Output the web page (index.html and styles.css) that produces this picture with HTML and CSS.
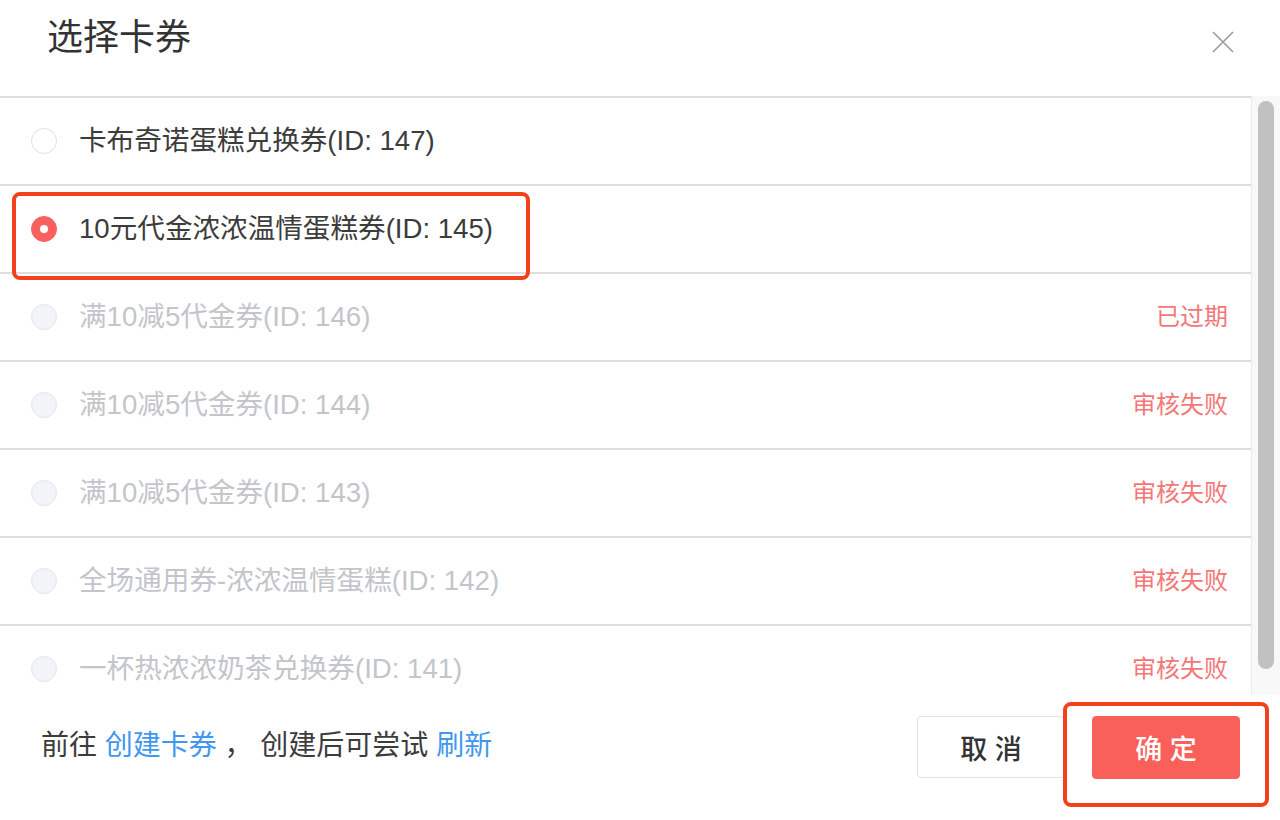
FILE: index.html
```html
<!DOCTYPE html>
<html>
<head>
  <meta charset="utf-8">
  <title>选择卡券</title>
  <link rel="stylesheet" href="styles.css">
</head>
<body>
  <div class="dialog">
    <div class="header">
      <h1 class="title">选择卡券</h1>
      <span class="close">
        <svg width="22" height="22" viewBox="0 0 22 22"><path d="M1 1 L21 21 M21 1 L1 21" stroke="#9a9a9a" stroke-width="1.6" fill="none"/></svg>
      </span>
    </div>

    <div class="body">
      <div class="list">
        <div class="row">
          <span class="radio"></span>
          <span class="name">卡布奇诺蛋糕兑换券(ID: 147)</span>
        </div>
        <div class="row">
          <span class="radio checked"></span>
          <span class="name">10元代金浓浓温情蛋糕券(ID: 145)</span>
          <span class="mark mark-row"></span>
        </div>
        <div class="row disabled">
          <span class="radio"></span>
          <span class="name">满10减5代金券(ID: 146)</span>
          <span class="status">已过期</span>
        </div>
        <div class="row disabled">
          <span class="radio"></span>
          <span class="name">满10减5代金券(ID: 144)</span>
          <span class="status">审核失败</span>
        </div>
        <div class="row disabled">
          <span class="radio"></span>
          <span class="name">满10减5代金券(ID: 143)</span>
          <span class="status">审核失败</span>
        </div>
        <div class="row disabled">
          <span class="radio"></span>
          <span class="name">全场通用券-浓浓温情蛋糕(ID: 142)</span>
          <span class="status">审核失败</span>
        </div>
        <div class="row disabled">
          <span class="radio"></span>
          <span class="name">一杯热浓浓奶茶兑换券(ID: 141)</span>
          <span class="status">审核失败</span>
        </div>
      </div>
      <div class="scroll"><div class="thumb"></div></div>
    </div>

    <div class="footer">
      <p class="hint">前往 <a href="#">创建卡券</a> ， 创建后可尝试 <a href="#">刷新</a></p>
      <div class="actions">
        <button class="btn">取 消</button>
        <div class="btn-wrap">
          <button class="btn primary">确 定</button>
          <span class="mark mark-btn"></span>
        </div>
      </div>
    </div>
  </div>
</body>
</html>
```

FILE: styles.css
```css
body {
  margin: 0;
  background: #fff;
  color: #333;
  font-family: "Liberation Sans", "Noto Sans CJK SC", sans-serif;
}
.dialog {
  width: 1280px;
  height: 820px;
  display: flex;
  flex-direction: column;
  overflow: hidden;
}
.header {
  height: 96px;
  display: flex;
  justify-content: space-between;
  align-items: flex-start;
  padding: 18px 46px 0 47px;
  box-sizing: border-box;
}
.title {
  margin: 0;
  font-size: 36px;
  font-weight: normal;
  line-height: 40px;
  color: #333;
}
.close {
  margin-top: 13px;
  display: block;
  width: 22px;
  height: 22px;
}
.body {
  height: 599px;
  display: flex;
}
.list {
  flex: 1;
  overflow: hidden;
  border-top: 2px solid #dedede;
}
.row {
  position: relative;
  height: 86px;
  border-bottom: 2px solid #dedede;
  display: flex;
  align-items: center;
  padding: 0 23px 0 31px;
}
.radio {
  width: 26px;
  height: 26px;
  box-sizing: border-box;
  border: 1.5px solid #dcdfe6;
  border-radius: 50%;
  background: #fff;
  margin-right: 22px;
  flex: none;
}
.radio.checked {
  background: #f86160;
  border-color: #f86160;
  display: flex;
  align-items: center;
  justify-content: center;
}
.radio.checked::after {
  content: "";
  width: 8px;
  height: 8px;
  border-radius: 50%;
  background: #fff;
}
.name {
  font-size: 27.6px;
  line-height: 40px;
  color: #3c3c3c;
}
.disabled .name {
  color: #c3c5cb;
}
.disabled .radio {
  background: #f2f4f7;
  border-color: #e4e7ed;
}
.status {
  margin-left: auto;
  font-size: 24px;
  line-height: 36px;
  color: #f47777;
}
.scroll {
  width: 29px;
  background: #f8f8f8;
  border-left: 1px solid #ebebeb;
  padding: 5px 6px 0;
  box-sizing: border-box;
  flex: none;
}
.thumb {
  height: 568px;
  background: #c1c1c1;
  border-radius: 9px;
}
.footer {
  flex: 1;
  display: flex;
  justify-content: space-between;
  align-items: flex-start;
  padding: 21px 40px 0 41px;
}
.hint {
  margin: 10px 0 0;
  font-size: 28px;
  line-height: 40px;
  color: #3c3c3c;
}
.hint a {
  color: #3f97f0;
  text-decoration: none;
}
.actions {
  display: flex;
  gap: 27px;
}
.btn {
  width: 148px;
  height: 62px;
  border: 1.5px solid #e0e3e9;
  border-radius: 4px;
  background: #fff;
  color: #333;
  font-family: inherit;
  font-size: 27px;
  font-weight: 500;
  padding: 0;
}
.btn-wrap {
  position: relative;
}
.btn.primary {
  height: 63px;
  background: #f9605a;
  border-color: #f9605a;
  color: #fff;
}
.mark {
  position: absolute;
  border: 4px solid #f3401d;
  border-radius: 8px;
  box-sizing: border-box;
  pointer-events: none;
}
.mark-row {
  left: 12px;
  top: 6px;
  width: 518px;
  height: 88px;
}
.mark-btn {
  left: -29px;
  top: -14px;
  width: 206px;
  height: 105px;
}
```
